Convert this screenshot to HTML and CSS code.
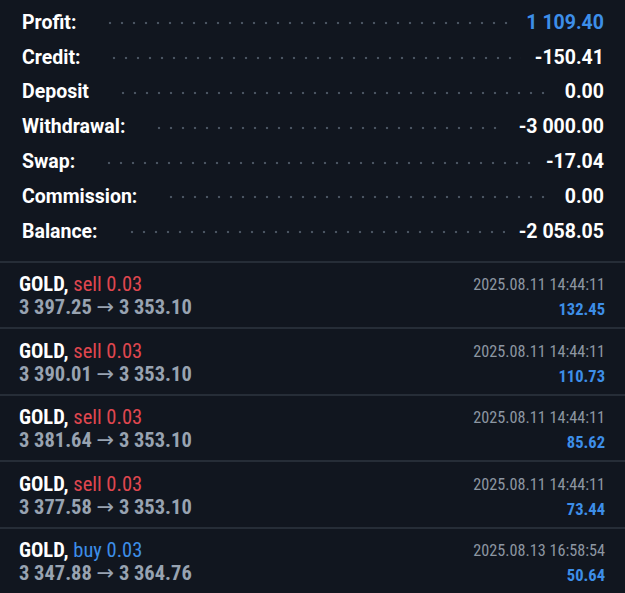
FILE: index.html
```html
<!DOCTYPE html>
<html lang="en">
  <head>
    <meta charset="UTF-8" />
    <meta name="viewport" content="width=device-width, initial-scale=1.0" />
    <title>History</title>
    <link rel="stylesheet" href="styles.css">
  </head>

  <body>
    <section class="summary">
      <div class="row"><span class="label">Profit:</span><span class="dots"></span><span class="value blue">1 109.40</span></div>
      <div class="row"><span class="label">Credit:</span><span class="dots"></span><span class="value">-150.41</span></div>
      <div class="row"><span class="label">Deposit</span><span class="dots"></span><span class="value">0.00</span></div>
      <div class="row"><span class="label">Withdrawal:</span><span class="dots"></span><span class="value">-3 000.00</span></div>
      <div class="row"><span class="label">Swap:</span><span class="dots"></span><span class="value">-17.04</span></div>
      <div class="row"><span class="label">Commission:</span><span class="dots"></span><span class="value">0.00</span></div>
      <div class="row"><span class="label">Balance:</span><span class="dots"></span><span class="value">-2 058.05</span></div>
    </section>

    <ul class="trades">
      <li class="trade">
        <div class="left">
          <div class="title">GOLD, <span class="sell">sell 0.03</span></div>
          <div class="price">3 397.25 <span class="arrow">→</span> 3 353.10</div>
        </div>
        <div class="right">
          <div class="date">2025.08.11 14:44:11</div>
          <div class="pl">132.45</div>
        </div>
      </li>
      <li class="trade">
        <div class="left">
          <div class="title">GOLD, <span class="sell">sell 0.03</span></div>
          <div class="price">3 390.01 <span class="arrow">→</span> 3 353.10</div>
        </div>
        <div class="right">
          <div class="date">2025.08.11 14:44:11</div>
          <div class="pl">110.73</div>
        </div>
      </li>
      <li class="trade">
        <div class="left">
          <div class="title">GOLD, <span class="sell">sell 0.03</span></div>
          <div class="price">3 381.64 <span class="arrow">→</span> 3 353.10</div>
        </div>
        <div class="right">
          <div class="date">2025.08.11 14:44:11</div>
          <div class="pl">85.62</div>
        </div>
      </li>
      <li class="trade">
        <div class="left">
          <div class="title">GOLD, <span class="sell">sell 0.03</span></div>
          <div class="price">3 377.58 <span class="arrow">→</span> 3 353.10</div>
        </div>
        <div class="right">
          <div class="date">2025.08.11 14:44:11</div>
          <div class="pl">73.44</div>
        </div>
      </li>
      <li class="trade">
        <div class="left">
          <div class="title">GOLD, <span class="buy">buy 0.03</span></div>
          <div class="price">3 347.88 <span class="arrow">→</span> 3 364.76</div>
        </div>
        <div class="right">
          <div class="date">2025.08.13 16:58:54</div>
          <div class="pl">50.64</div>
        </div>
      </li>
    </ul>
  </body>
</html>
```

FILE: styles.css
```css
body {
  margin: 0;
  background: #11161f;
  color: #fff;
  font-family: Roboto, "Noto Sans", sans-serif;
}

.summary {
  padding: 5px 21px 12px 22px;
}

.row {
  display: flex;
  align-items: center;
  height: 34.8px;
  font-size: 19.5px;
  font-weight: bold;
}

.dots {
  flex: 1;
  height: 4px;
  margin: 2px 14px 0 28px;
  background-image: radial-gradient(circle, #4a5461 1.2px, transparent 1.6px);
  background-size: 12px 4px;
  background-repeat: repeat-x;
}

.value {
  text-align: right;
}

.blue {
  color: #3d8ee8;
}

.trades {
  list-style: none;
  margin: 0;
  padding: 0;
  border-top: 2px solid #262d37;
}

.trade {
  display: flex;
  justify-content: space-between;
  padding: 10.5px 20px 6px 19px;
  border-bottom: 2px solid #262d37;
  font-family: "Roboto Condensed", Roboto, sans-serif;
}

.title,
.price {
  height: 23px;
  line-height: 23px;
  font-size: 20.5px;
}

.title {
  font-weight: bold;
}

.sell {
  color: #e0474f;
  font-weight: normal;
}

.buy {
  color: #3d8ee8;
  font-weight: normal;
}

.price {
  color: #98a3b1;
  font-weight: bold;
}

.arrow {
  font-family: "DejaVu Sans", sans-serif;
  font-weight: normal;
  font-size: 21px;
}

.right {
  text-align: right;
}

.date {
  height: 23px;
  line-height: 23px;
  font-size: 16.2px;
  color: #8d96a2;
}

.pl {
  height: 25px;
  line-height: 27px;
  font-size: 16.5px;
  font-weight: bold;
  color: #3d8ee8;
}
```
